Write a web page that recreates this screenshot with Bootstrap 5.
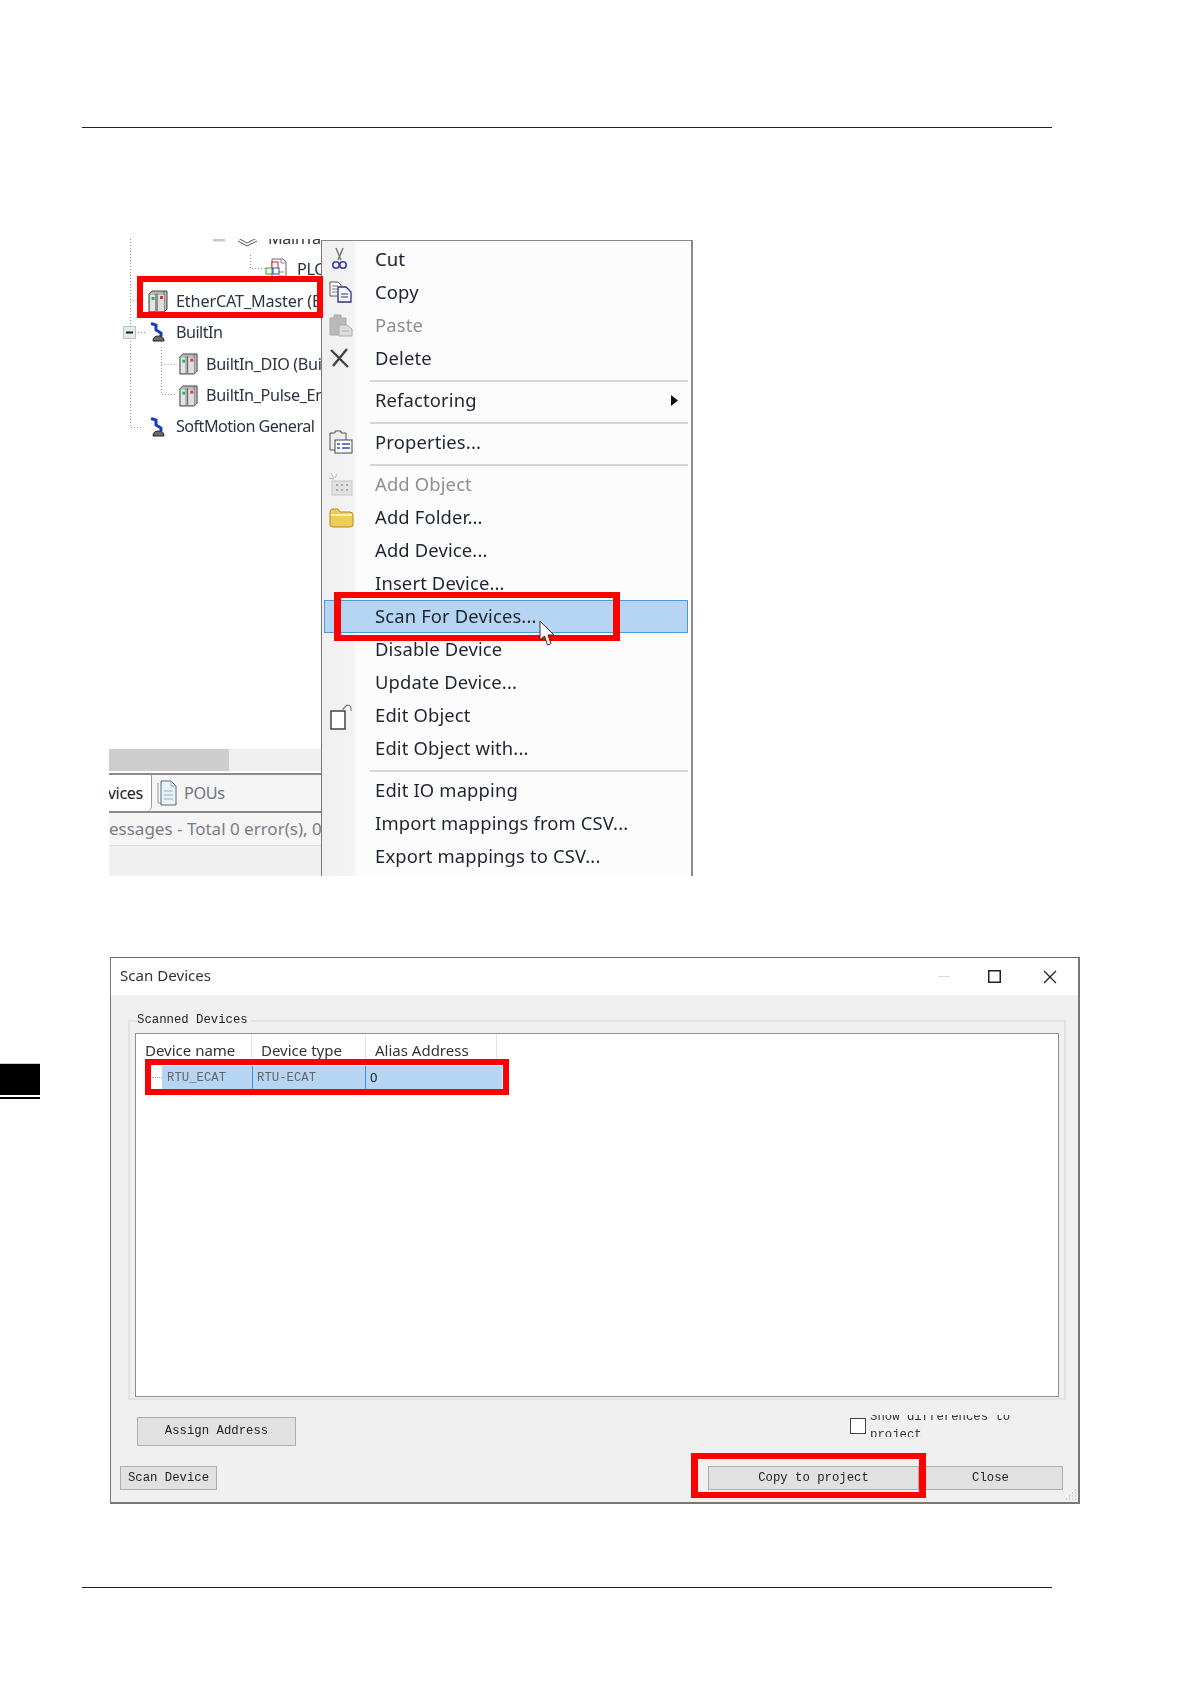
<!DOCTYPE html>
<html lang="en">
<head>
<meta charset="utf-8">
<title>Scan Devices</title>
<link href="https://cdn.jsdelivr.net/npm/bootstrap@5.3.0/dist/css/bootstrap.min.css" rel="stylesheet">
<style>
html,body{background:#fff}
body{width:1191px;height:1684px;overflow:hidden;position:relative;font-family:"Noto Sans",sans-serif;color:#222}
.rule-top{margin:127px 139px 0 82px;height:1px;background:#222}
.rule-bot{position:absolute;left:82px;top:1587px;width:970px;height:1px;background:#222}
.tab-mark{position:absolute;left:0;top:1063px;width:40px;height:36px;border-top:1px solid #ccc;border-bottom:2px solid #000;background:linear-gradient(#000,#000) 0 0/100% 31px no-repeat}
.shot{margin:111px 0 0 109px;width:584px;height:637px;position:relative;filter:blur(.3px)}
.pane{width:212px;height:637px;overflow:hidden;position:relative;font-size:16.2px;letter-spacing:-.35px;color:#2b3442}
.tree{height:510px;overflow:hidden;position:relative}
.tree-lines{position:absolute;left:0;top:0}
.tree-rows{margin-top:-16.5px}
.trow{height:31.4px;white-space:nowrap}
.trow svg{flex:none}
.l-ether{padding-left:38px;gap:7px;letter-spacing:-.15px}
.l-robot{padding-left:41px;gap:10px;letter-spacing:-.55px}
.l-mod{padding-left:69px;gap:7px}
.l-plc{padding-left:156px;gap:10px}
.l-main{padding-left:128px;gap:10px}
.hscroll{height:22px;background:#f0f0f0}
.hthumb{width:120px;height:22px;background:#cdcdcd}
.tabsline{height:40px;border-top:2px solid #8b8b8b;border-bottom:2px solid #8b8b8b;background:#f5f5f5;margin-top:2px}
.tab-on{width:43px;background:#fff;border-right:1px solid #999;border-bottom-right-radius:5px;text-align:right;padding-right:8px;overflow:hidden;white-space:nowrap;color:#222}
.tab-off{padding-left:5px;gap:7px;color:#6d7480}
.msgs{height:33px;border-bottom:1px solid #ddd;background:#f5f5f5;color:#787d85;white-space:nowrap;overflow:hidden;font-size:17px;letter-spacing:0}
.rest{height:30px;background:#f0f0f0}
.ctx.dropdown-menu{position:relative;display:block;width:372px;height:636px;min-width:0;margin:1px 0 0;padding:1.5px 0 0;border:0;border-radius:0;border-top:1px solid #888;border-left:1px solid #777;border-right:2px solid #8a8a8a;background:linear-gradient(90deg,#f0f0f0 0,#f3f3f3 30px,#fcfcfc 36px);overflow:hidden;font-size:18.4px;letter-spacing:.15px;color:#1e2530}
.ctx .dropdown-item{height:33px;padding:0 0 0 53px;position:relative;color:#1e2530;display:flex;align-items:center;background:none}
.ctx .dropdown-item.disabled{color:#8f8f8f}
.ctx .dropdown-item.hot{background:#b5d5f2;outline:1px solid #4a9ae0;outline-offset:-1px;margin:0 2px;padding-left:51px;width:364px}
.ctx .dropdown-divider{margin:5px 3px 2px 48px;border-top:2px solid #d5d5d5;opacity:1}
.mi{position:absolute;left:6px;top:4px}
.sub{position:absolute;right:13px;top:11px}
.redbox{position:absolute;border-style:solid;border-color:#f00;pointer-events:none;z-index:1001}
.r1{left:28px;top:37px;width:186px;height:42px;border-width:6px}
.r2{left:225px;top:353px;width:286px;height:49px;border-width:6px 7px}
.cursor{position:absolute;left:430px;top:381px;z-index:1002}
.dlg.card{position:absolute;left:110px;top:957px;width:970px;height:547px;border:0;border-radius:0;border-top:1px solid #666;border-left:1px solid #777;border-right:2px solid #777;border-bottom:2px solid #777;background:#f0f0f0;filter:blur(.3px)}
.dlg-title{height:37px;background:#fff;padding:0 0 2px 9px;font-size:15.1px;color:#333}
.winbtns{position:absolute;right:0;top:0;height:37px}
.winbtns svg{position:absolute;top:12px}
.dlg-body{padding:25px 12px 0 9px;font-family:"Liberation Mono",monospace;font-size:12.3px;color:#222}
.group{margin-left:8px;height:380px;border:2px solid #e2e2e2;padding:11px 5px 0 5px;position:relative}
.legend{position:absolute;left:7px;top:-9px;background:#f0f0f0;line-height:14px;padding-right:3px}
.tlist{height:364px;background:#fff;border:1px solid #8f8f8f;position:relative}
.thead{height:32px;font-family:"Noto Sans",sans-serif;font-size:15px;color:#333}
.thead>div{border-right:1px solid #e3e3e3;padding-left:9px;display:flex;align-items:center;border-bottom:0;white-space:nowrap}
.c1{width:116px}.c2{width:114px}.c3{width:131px}
.tsel{height:23px;margin-left:26px;width:340px;background:#b5d5f2;color:#666}
.tsel>div{display:flex;align-items:center;height:100%;padding-top:1px}
.s1{width:90px;padding-left:5px}
.s2{width:114px;padding-left:4px;border-left:1px solid #3f8fd6;border-right:1px solid #3f8fd6}
.s3{padding-left:4px;font-family:"Noto Sans",sans-serif;font-size:13px;color:#222}
.tdots{position:absolute;left:16px;top:43px;width:10px;border-top:1px dotted #aaa}
.r3{left:9px;top:25px;width:364px;height:36px;border-width:6px}
.btn.gb{--bs-btn-padding-x:0;--bs-btn-padding-y:0;--bs-btn-font-size:12.3px;--bs-btn-font-family:"Liberation Mono",monospace;--bs-btn-color:#222;--bs-btn-bg:#e1e1e1;--bs-btn-border-color:#adadad;--bs-btn-border-radius:0;--bs-btn-line-height:1;--bs-btn-hover-bg:#e1e1e1;--bs-btn-hover-color:#222;--bs-btn-hover-border-color:#adadad}
.b-assign{width:159px;height:29px;margin-left:17px}
.midrow{margin-top:17px;height:29px}
.chk{width:16px;height:16px;border:1.5px solid #444;background:#fff;margin-top:1px;flex:none}
.chk-wrap{gap:4px;margin-right:20px;width:196px}
.chk-txt{height:22px;width:170px;overflow:hidden;margin-top:-2px;color:#333;display:flex;align-items:center}
.chk-txt span{line-height:18px;display:block;flex:none;width:170px}
.botrow{margin-top:20px;height:24px;margin-right:3px}
.b-scan{width:97px;height:24px}
.b-copy{width:211px;height:24px}
.b-close{width:144px;height:24px;border-left:0}
.r4{left:580px;top:495px;width:235px;height:45px;border-width:6px 7px}
.grip{position:absolute;right:1px;bottom:2px}
</style>
</head>
<body>
<svg width="0" height="0" class="position-absolute">
<defs>
<symbol id="mod" viewBox="0 0 22 24">
<path d="M2 5 L5 2 H20 V20 L17 23 H2Z" fill="#b9b9b9" stroke="#444" stroke-width="1"/>
<path d="M8 5V23M10 4V22M17 2V23" stroke="#666" fill="none"/><rect x="3" y="6" width="5" height="16" fill="#e4e4e4"/><rect x="11" y="6" width="6" height="16" fill="#dedede"/>
<rect x="4.500" y="8" width="3" height="3" fill="#22b84a"/><rect x="13" y="7" width="3" height="3" fill="#d03a3a"/>
</symbol>
<symbol id="robot" viewBox="0 0 16 20">
<path d="M1 1.500 L6 3 L6 8 L11 11 L11 14" fill="none" stroke="#1b39c9" stroke-width="3"/>
<path d="M3 19 Q3 14 8.500 14 Q14 14 14 19Z" fill="#6a6a6a" stroke="#222"/>
</symbol>
</defs>
</svg>

<div class="rule-top"></div>
<div class="tab-mark"></div>

<div class="shot d-flex">
  <div class="pane">
    <div class="tree">
      <div class="tree-rows">
        <div class="trow d-flex align-items-center l-main"><svg width="21" height="18" viewBox="0 0 21 18"><path d="M1 9 10 4 20 9 10 14Z M1 12 10 17 20 12" fill="none" stroke="#555"/></svg><span>MainTask</span></div>
        <div class="trow d-flex align-items-center l-plc"><svg width="22" height="23" viewBox="0 0 22 23"><path d="M7 1H18L21 4V22H7Z" fill="#fff" stroke="#666"/><path d="M16 2v3h4M13 18h6M13 14h6" stroke="#888" fill="none"/><rect x="7" y="4" width="6" height="7" fill="#fff" stroke="#c22"/><rect x="1" y="10" width="6" height="6" fill="#fff" stroke="#2a9a3a"/><rect x="8" y="10" width="6" height="6" fill="#fff" stroke="#2b4ec9"/></svg><span>PLC_PRG</span></div>
        <div class="trow d-flex align-items-center l-ether"><svg width="22" height="24"><use href="#mod"/></svg><span>EtherCAT_Master (EtherCAT)</span></div>
        <div class="trow d-flex align-items-center l-robot"><svg width="16" height="20"><use href="#robot"/></svg><span>BuiltIn</span></div>
        <div class="trow d-flex align-items-center l-mod"><svg width="21" height="23"><use href="#mod"/></svg><span>BuiltIn_DIO (BuiltIn_DIO)</span></div>
        <div class="trow d-flex align-items-center l-mod"><svg width="21" height="23"><use href="#mod"/></svg><span>BuiltIn_Pulse_Encoder</span></div>
        <div class="trow d-flex align-items-center l-robot"><svg width="16" height="20"><use href="#robot"/></svg><span>SoftMotion General</span></div>
      </div>
      <svg class="tree-lines" width="212" height="200" viewBox="0 0 212 200">
        <g fill="none" stroke="#999" stroke-dasharray="1 2">
          <path d="M21.500 0V188.500H34M21.500 61.500H36M26 93.500H38M52.500 108V155.500H68M52.500 125.500H68M141.500 16V29.500H156"/>
        </g>
        <rect x="14.500" y="87.500" width="12" height="12" fill="#e3ecec" stroke="#b5c4c4"/>
        <path d="M17 93.500h7" stroke="#222" stroke-width="2"/>
        <path d="M104 0h12" stroke="#c8c8c8" stroke-width="5"/>
      </svg>
    </div>
    <div class="hscroll"><div class="hthumb"></div></div>
    <div class="tabsline d-flex">
      <div class="tab-on d-flex align-items-center justify-content-end"><span>vices</span></div>
      <div class="tab-off d-flex align-items-center"><svg width="20" height="26" viewBox="0 0 20 26"><path d="M1 3V23H4" fill="none" stroke="#999"/><path d="M4 1H14L19 6V25H4Z" fill="#e8f2fb" stroke="#5a6a7a"/><path d="M14 1V6H19M7 11H16M7 15H16M7 19H16" stroke="#9ab" fill="none"/></svg><span>POUs</span></div>
    </div>
    <div class="msgs d-flex align-items-center"><span>essages - Total 0 error(s), 0 warning(s)</span></div>
    <div class="rest"></div>
  </div>

  <div class="ctx dropdown-menu">
    <a class="dropdown-item" href="#"><svg class="mi" width="26" height="25" viewBox="0 0 26 25"><path d="M8 1 13 13M15 1 10 13" stroke="#777" stroke-width="1.500" fill="none"/><circle cx="8" cy="18" r="3.200" fill="none" stroke="#3c3cb0" stroke-width="1.600"/><circle cx="15" cy="18" r="3.200" fill="none" stroke="#3c3cb0" stroke-width="1.600"/></svg>Cut</a>
    <a class="dropdown-item" href="#"><svg class="mi" width="26" height="25" viewBox="0 0 26 25"><path d="M2 2H10L13 5V16H2Z" fill="#fff" stroke="#555"/><path d="M4 6H10M4 9H10M4 12H10" stroke="#777"/><path d="M10 7H18L23 12V22H10Z" fill="#f4f4ff" stroke="#33337f" stroke-width="1.300"/><path d="M13 14H20M13 17H20" stroke="#33337f"/></svg>Copy</a>
    <a class="dropdown-item disabled" href="#"><svg class="mi" width="26" height="25" viewBox="0 0 26 25"><path d="M2 5H6V2H13V5H18V22H2Z" fill="#b9b9b9" stroke="#aaa"/><path d="M11 12H19L24 16V23H11Z" fill="#ddd" stroke="#aaa"/><path d="M14 18H21" stroke="#aaa"/></svg>Paste</a>
    <a class="dropdown-item" href="#"><svg class="mi" width="26" height="25" viewBox="0 0 26 25"><path d="M3 4 20 21M19 3 5 20" stroke="#444" stroke-width="2.400" fill="none"/></svg>Delete</a>
    <hr class="dropdown-divider">
    <a class="dropdown-item" href="#">Refactoring<svg class="sub" width="7" height="11"><path d="M0 0 7 5.500 0 11Z" fill="#111"/></svg></a>
    <hr class="dropdown-divider">
    <a class="dropdown-item" href="#"><svg class="mi" width="26" height="25" viewBox="0 0 26 25"><path d="M2 3H7V1H13V3H18V20H2Z" fill="#eee" stroke="#555"/><rect x="7" y="10" width="17" height="13" fill="#fff" stroke="#444"/><path d="M9 14h3M14 14h8M9 18h3M14 18h8" stroke="#2b4ec9" stroke-width="1.500"/></svg>Properties...</a>
    <hr class="dropdown-divider">
    <a class="dropdown-item disabled" href="#"><svg class="mi" width="26" height="25" viewBox="0 0 26 25"><path d="M3 1 6 6M1 6 6 7M9 2 7 6" stroke="#bbb"/><rect x="4" y="9" width="20" height="14" fill="#e2e2e2" stroke="#c5c5c5"/><path d="M8 13h2M13 13h2M18 13h2M8 18h2M13 18h2M18 18h2" stroke="#aaa" stroke-width="2"/></svg>Add Object</a>
    <a class="dropdown-item" href="#"><svg class="mi" width="26" height="25" viewBox="0 0 26 25"><path d="M2 7Q2 4 5 4H10L12 7H22Q25 7 25 10V20Q25 22 22 22H5Q2 22 2 20Z" fill="#f1cc55" stroke="#b08a22"/><path d="M3 10H24" stroke="#fff2b5" stroke-width="2"/></svg>Add Folder...</a>
    <a class="dropdown-item" href="#">Add Device...</a>
    <a class="dropdown-item" href="#">Insert Device...</a>
    <a class="dropdown-item hot" href="#">Scan For Devices...</a>
    <a class="dropdown-item" href="#">Disable Device</a>
    <a class="dropdown-item" href="#">Update Device...</a>
    <a class="dropdown-item" href="#"><svg class="mi" width="26" height="28" viewBox="0 0 26 28"><path d="M3 8H17V26H3Z" fill="#fff" stroke="#444" stroke-width="1.500"/><path d="M15 8V6L19 2M19 2Q24 2 23 8" fill="none" stroke="#777" stroke-width="1.200"/></svg>Edit Object</a>
    <a class="dropdown-item" href="#">Edit Object with...</a>
    <hr class="dropdown-divider">
    <a class="dropdown-item" href="#">Edit IO mapping</a>
    <a class="dropdown-item" href="#">Import mappings from CSV...</a>
    <a class="dropdown-item" href="#">Export mappings to CSV...</a>
  </div>

  <div class="redbox r1"></div>
  <div class="redbox r2"></div>
  <svg class="cursor" width="16" height="28" viewBox="0 0 16 28"><path d="M1 1V20L5.500 16 8.500 25 12 23.500 9 15H15Z" fill="#fff" stroke="#333"/></svg>
</div>

<div class="dlg card">
  <div class="dlg-title d-flex align-items-center">Scan Devices</div>
  <div class="winbtns">
    <svg style="right:128px" width="12" height="12"><path d="M0 6.500h12" stroke="#ddd"/></svg>
    <svg style="right:77px" width="13" height="13"><rect x=".75" y=".75" width="11.500" height="11.500" fill="none" stroke="#222" stroke-width="1.500"/></svg>
    <svg style="right:21px" width="14" height="14"><path d="M1 1 13 13M13 1 1 13" stroke="#222" stroke-width="1.300"/></svg>
  </div>
  <div class="dlg-body">
    <div class="group">
      <div class="legend">Scanned Devices</div>
      <div class="tlist">
        <div class="thead d-flex">
          <div class="c1">Device name</div><div class="c2">Device type</div><div class="c3">Alias Address</div>
        </div>
        <div class="tsel d-flex">
          <div class="s1">RTU_ECAT</div><div class="s2">RTU-ECAT</div><div class="s3">0</div>
        </div>
        <div class="tdots"></div>
        <div class="redbox r3"></div>
      </div>
    </div>
    <div class="midrow d-flex justify-content-between">
      <button class="btn gb b-assign" type="button">Assign Address</button>
      <div class="chk-wrap d-flex">
        <div class="chk"></div>
        <div class="chk-txt"><span>Show differences to project</span></div>
      </div>
    </div>
    <div class="botrow d-flex justify-content-between">
      <button class="btn gb b-scan" type="button">Scan Device</button>
      <div class="d-flex">
        <button class="btn gb b-copy" type="button">Copy to project</button>
        <button class="btn gb b-close" type="button">Close</button>
      </div>
    </div>
    <div class="redbox r4"></div>
  </div>
  <svg class="grip" width="12" height="12"><path d="M10 2h1M7 5h1M10 5h1M4 8h1M7 8h1M10 8h1M1 11h1M4 11h1M7 11h1M10 11h1" stroke="#aaa"/></svg>
</div>
<div class="rule-bot"></div>

<script src="https://cdn.jsdelivr.net/npm/bootstrap@5.3.0/dist/js/bootstrap.bundle.min.js"></script>
</body>
</html>
